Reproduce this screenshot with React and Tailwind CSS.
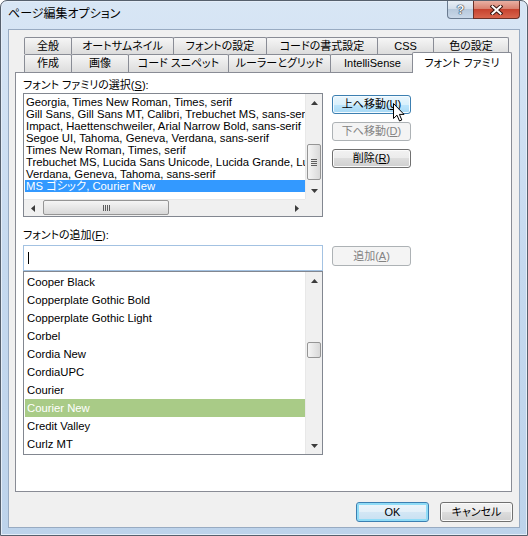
import React from "react";

const FONT = "font-['Liberation_Sans','Noto_Sans_CJK_JP',sans-serif] [font-feature-settings:'palt']";

function Tri({ dir }) {
  const pts = {
    up: "0,4 3.5,0 7,4",
    down: "0,0 3.5,4 7,0",
    left: "4,0 0,3.5 4,7",
    right: "0,0 4,3.5 0,7",
  }[dir];
  const vert = dir === "up" || dir === "down";
  return (
    <svg width={vert ? 7 : 4} height={vert ? 4 : 7} viewBox={vert ? "0 0 7 4" : "0 0 4 7"}>
      <polygon points={pts} fill="#3c3c3c" />
    </svg>
  );
}

function VGrip() {
  return (
    <div className="flex flex-col gap-[1px]">
      <div className="w-[6px] h-px bg-[#5d5d5d]" />
      <div className="w-[6px] h-px bg-[#5d5d5d]" />
      <div className="w-[6px] h-px bg-[#5d5d5d]" />
      <div className="w-[6px] h-px bg-[#5d5d5d]" />
    </div>
  );
}

function HGrip() {
  return (
    <div className="flex gap-[1px]">
      <div className="h-[6px] w-px bg-[#5d5d5d]" />
      <div className="h-[6px] w-px bg-[#5d5d5d]" />
      <div className="h-[6px] w-px bg-[#5d5d5d]" />
      <div className="h-[6px] w-px bg-[#5d5d5d]" />
    </div>
  );
}

function Tab({ w, children }) {
  return (
    <div
      className={`${w} -ml-px first:ml-0 h-full border border-b-0 border-[#898c95] rounded-t-[2px] bg-linear-to-b from-[#f6f6f6] to-[#dcdcdc] flex items-center justify-center text-[11px] leading-none text-black whitespace-nowrap`}
    >
      {children}
    </div>
  );
}

function Btn({ w, h, kind, children }) {
  const styles = {
    normal:
      "border-[#707070] bg-[linear-gradient(to_bottom,#f2f2f2_0%,#ebebeb_50%,#dddddd_50%,#cfcfcf_100%)] shadow-[inset_0_0_0_1px_#fbfbfb] text-black",
    hover:
      "border-[#3c7fb1] bg-[linear-gradient(to_bottom,#eaf6fd_0%,#d9f0fc_50%,#bee6fd_50%,#a7d9f5_100%)] shadow-[inset_0_0_0_1px_#f4fbff] text-black",
    def:
      "border-[#3c7fb1] bg-[linear-gradient(to_bottom,#eef6fb_0%,#e2eff8_50%,#d3e7f5_50%,#c8e0f1_100%)] shadow-[inset_0_0_0_2px_#8fdcf7] text-black",
    disabled: "border-[#adb2b5] bg-[#f4f4f4] text-[#838383]",
  }[kind];
  return (
    <div
      className={`${w} ${h} border rounded-[3px] ${styles} flex items-center justify-center text-[11px] leading-none whitespace-nowrap`}
    >
      {children}
    </div>
  );
}

const list1 = [
  "Georgia, Times New Roman, Times, serif",
  "Gill Sans, Gill Sans MT, Calibri, Trebuchet MS, sans-serif",
  "Impact, Haettenschweiler, Arial Narrow Bold, sans-serif",
  "Segoe UI, Tahoma, Geneva, Verdana, sans-serif",
  "Times New Roman, Times, serif",
  "Trebuchet MS, Lucida Sans Unicode, Lucida Grande, Lucida Sans, Arial, sans-serif",
  "Verdana, Geneva, Tahoma, sans-serif",
  "MS ゴシック, Courier New",
];

const list2 = [
  "Cooper Black",
  "Copperplate Gothic Bold",
  "Copperplate Gothic Light",
  "Corbel",
  "Cordia New",
  "CordiaUPC",
  "Courier",
  "Courier New",
  "Credit Valley",
  "Curlz MT",
];

export default function App() {
  return (
    <div className={`relative w-[528px] h-[536px] ${FONT}`}>
      <div className="flex flex-col w-[528px] h-[536px] rounded-t-[7px] border border-[#56606d] bg-linear-to-b from-[#d8e6f5] via-[#c5d9ef] to-[#bdd3eb] shadow-[inset_0_0_0_1px_#e4edf8]">
        {/* title bar */}
        <div className="flex h-[28px] items-start">
          <div className="pl-[7px] pt-[5px] text-[12px] leading-[16px] text-black">ページ編集オプション</div>
          <div className="ml-auto mr-[7px] flex">
            <div className="w-[27px] h-[18px] border border-t-0 border-[#6a7b90] rounded-bl-[4px] bg-[linear-gradient(to_bottom,#e9eff6_0%,#d3deea_45%,#b7c9dc_50%,#c9d8e9_100%)] flex items-center justify-center">
              <span className="text-[13px] font-bold leading-none text-[#f4f6f8] [text-shadow:0_0_1px_#1e2c3c,0_0_1px_#1e2c3c,0_0_1px_#1e2c3c]">?</span>
            </div>
            <div className="w-[47px] h-[18px] -ml-px border border-t-0 border-[#6b3128] rounded-br-[4px] bg-[linear-gradient(to_bottom,#e9b0a3_0%,#d98270_45%,#c7432f_50%,#d8654d_100%)] flex items-center justify-center">
              <svg width="13" height="10" viewBox="0 0 13 10">
                <path d="M2.5 1.5 L10.5 8.5 M10.5 1.5 L2.5 8.5" stroke="#3b1812" strokeWidth="4" strokeLinecap="square" />
                <path d="M2.5 1.5 L10.5 8.5 M10.5 1.5 L2.5 8.5" stroke="#ffffff" strokeWidth="2" strokeLinecap="square" />
              </svg>
            </div>
          </div>
        </div>

        {/* client area */}
        <div className="mx-[7px] h-[499px] border border-[#98abc2] bg-[#f0f0f0] flex flex-col">
          {/* tab strip */}
          <div className="mt-[7px] ml-[6px] w-[497px] flex flex-col">
            <div className="h-[17px] flex pl-[9px]">
              <Tab w="w-[48px]">全般</Tab>
              <Tab w="w-[103px]">オートサムネイル</Tab>
              <Tab w="w-[94px]">フォントの設定</Tab>
              <Tab w="w-[112px]">コードの書式設定</Tab>
              <Tab w="w-[57px]">CSS</Tab>
              <Tab w="w-[76px]">色の設定</Tab>
            </div>
            <div className="h-[18px] flex items-end pl-[9px]">
              <Tab w="w-[48px]">作成</Tab>
              <Tab w="w-[58px]">画像</Tab>
              <Tab w="w-[101px]">コード スニペット</Tab>
              <Tab w="w-[103px]">ルーラーとグリッド</Tab>
              <Tab w="w-[85px]">IntelliSense</Tab>
              <div className="relative z-10 w-[100px] h-[21px] -mb-px -ml-[3px] border border-b-0 border-[#898c95] rounded-t-[2px] bg-white flex items-center justify-center text-[11px] leading-none text-black whitespace-nowrap">
                フォント ファミリ
              </div>
            </div>
          </div>

          {/* panel */}
          <div className="ml-[6px] w-[497px] h-[420px] border border-[#898c95] bg-white flex flex-col pl-[7px]">
            <div className="mt-[5px] h-[15px] text-[11px] leading-[15px] text-black">
              フォント ファミリの選択(<span className="underline">S</span>):
            </div>
            <div className="flex">
              {/* list 1 */}
              <div className="w-[300px] h-[124px] border border-[#828790] flex flex-col">
                <div className="flex h-[105px]">
                  <div className="flex-1 overflow-hidden pt-[2px] pl-[1px]">
                    {list1.map((t, i) => (
                      <div
                        key={i}
                        className={`h-[12px] text-[11.3px] leading-[12px] pl-[1px] whitespace-nowrap overflow-hidden ${
                          i === 7 ? "bg-[#3399ff] text-white" : "text-black"
                        }`}
                      >
                        {t}
                      </div>
                    ))}
                  </div>
                  <div className="w-[17px] flex flex-col bg-[#f0f0f0] border-l border-[#e8e8e8]">
                    <div className="h-[17px] flex items-center justify-center"><Tri dir="up" /></div>
                    <div className="flex-1">
                      <div className="mt-[33px] h-[36px] mx-[1px] border border-[#959595] rounded-[2px] bg-linear-to-r from-[#f5f5f5] to-[#d9d9d9] flex items-center justify-center">
                        <VGrip />
                      </div>
                    </div>
                    <div className="h-[17px] flex items-center justify-center"><Tri dir="down" /></div>
                  </div>
                </div>
                <div className="flex h-[17px]">
                  <div className="flex-1 flex bg-[#f0f0f0] border-t border-[#e8e8e8]">
                    <div className="w-[17px] flex items-center justify-center"><Tri dir="left" /></div>
                    <div className="flex-1">
                      <div className="ml-[2px] w-[126px] h-[15px] mt-[0px] border border-[#959595] rounded-[2px] bg-linear-to-b from-[#f5f5f5] to-[#d9d9d9] flex items-center justify-center">
                        <HGrip />
                      </div>
                    </div>
                    <div className="w-[17px] flex items-center justify-center"><Tri dir="right" /></div>
                  </div>
                  <div className="w-[17px] bg-[#f0f0f0]" />
                </div>
              </div>
              {/* buttons */}
              <div className="ml-[9px] mt-[2px] flex flex-col gap-[8px]">
                <Btn w="w-[79px]" h="h-[19px]" kind="hover">
                  上へ移動(<span className="underline">U</span>)
                </Btn>
                <Btn w="w-[79px]" h="h-[19px]" kind="disabled">
                  下へ移動(<span className="underline">D</span>)
                </Btn>
                <Btn w="w-[79px]" h="h-[19px]" kind="normal">
                  削除(<span className="underline">R</span>)
                </Btn>
              </div>
            </div>

            <div className="mt-[11px] h-[14px] text-[11px] leading-[14px] text-black">
              フォントの追加(<span className="underline">F</span>):
            </div>
            <div className="mt-[3px] flex">
              <div className="w-[300px] h-[26px] border border-[#a3c2e2] bg-white flex items-center pl-[4px]">
                <div className="w-px h-[12px] bg-black" />
              </div>
              <div className="ml-[9px] mt-[1px]">
                <Btn w="w-[79px]" h="h-[20px]" kind="disabled">
                  追加(<span className="underline">A</span>)
                </Btn>
              </div>
            </div>
            {/* list 2 */}
            <div className="w-[300px] h-[184px] border border-[#828790] flex">
              <div className="flex-1 overflow-hidden pt-[1px] pl-[1px]">
                {list2.map((t, i) => (
                  <div
                    key={i}
                    className={`h-[18px] text-[11.3px] leading-[18px] pl-[2px] whitespace-nowrap ${
                      i === 7 ? "bg-[#a9cb87] text-white" : "text-black"
                    }`}
                  >
                    {t}
                  </div>
                ))}
              </div>
              <div className="w-[17px] flex flex-col bg-[#f0f0f0] border-l border-[#e8e8e8]">
                <div className="h-[17px] flex items-center justify-center"><Tri dir="up" /></div>
                <div className="flex-1">
                  <div className="mt-[53px] h-[16px] mx-[1px] border border-[#959595] rounded-[2px] bg-linear-to-r from-[#f5f5f5] to-[#d9d9d9]" />
                </div>
                <div className="h-[17px] flex items-center justify-center"><Tri dir="down" /></div>
              </div>
            </div>
          </div>

          {/* bottom buttons */}
          <div className="mt-[10px] flex justify-end pr-[6px] gap-[11px]">
            <Btn w="w-[73px]" h="h-[20px]" kind="def">OK</Btn>
            <Btn w="w-[73px]" h="h-[20px]" kind="normal">キャンセル</Btn>
          </div>
        </div>
      </div>

      {/* mouse cursor */}
      <svg className="absolute left-[393px] top-[103px]" width="12" height="19" viewBox="0 0 12 19">
        <path d="M0.5 0.5 L0.5 15.5 L4 12.2 L6.5 18 L8.8 17 L6.4 11.4 L11 11.4 Z" fill="#ffffff" stroke="#000000" strokeWidth="1" strokeLinejoin="miter" />
      </svg>
    </div>
  );
}
